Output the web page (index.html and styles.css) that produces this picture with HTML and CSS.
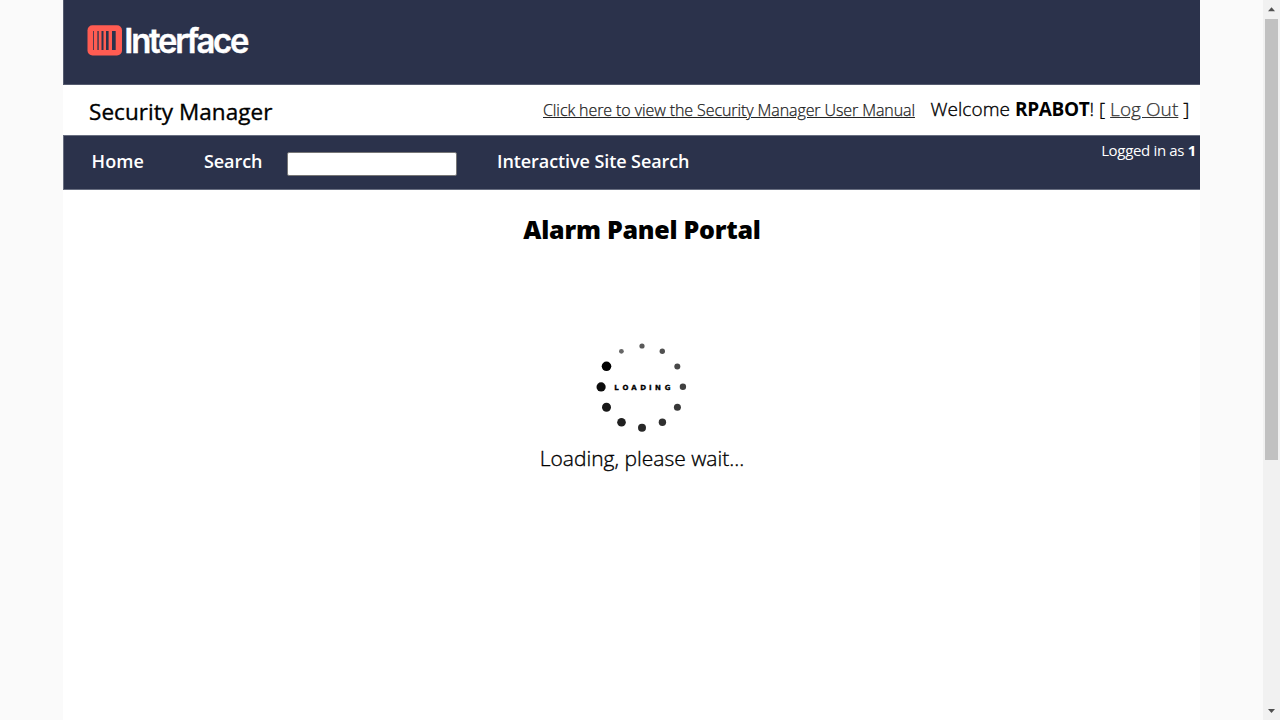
FILE: index.html
```html
<!DOCTYPE html>
<html lang="en">
<head>
<meta charset="utf-8">
<title>Security Manager</title>
<link rel="stylesheet" href="styles.css">
</head>
<body>
<div class="page">
  <header class="banner">
    <svg class="logo" width="180" height="50" viewBox="0 -8 180 50">
      <rect x="0.5" y="1.2" width="34.5" height="30.3" rx="5" fill="#ff5c52"/>
      <g fill="#2b324b">
        <rect x="6" y="7" width="0.8" height="19"/>
        <rect x="10.4" y="7" width="1.3" height="19"/>
        <rect x="14.5" y="7" width="2" height="19"/>
        <rect x="19" y="7" width="2.6" height="19"/>
        <rect x="25" y="7" width="3.7" height="19"/>
      </g>
      <text class="wordmark" x="37.3" y="28.8" textLength="122.8" lengthAdjust="spacingAndGlyphs">Interface</text>
    </svg>
  </header>
  <div class="titlebar">
    <div class="app-name">Security Manager</div>
    <a class="manual">Click here to view the Security Manager User Manual</a>
    <div class="welcome">Welcome <b>RPABOT</b>! [ <a class="logout">Log Out</a> ]</div>
  </div>
  <nav class="nav">
    <span class="home">Home</span>
    <span class="search">Search</span>
    <input class="query" type="text">
    <span class="site-search">Interactive Site Search</span>
    <span class="status">Logged in as <b>1</b></span>
  </nav>
  <main class="content">
    <h1 class="heading">Alarm Panel Portal</h1>
    <svg class="spinner" width="100" height="100" viewBox="592 337 100 100">
      <circle cx="642" cy="346" r="2.6" fill="#595959"/>
      <circle cx="662.3" cy="351.3" r="2.7" fill="#505050"/>
      <circle cx="677.3" cy="366.4" r="3" fill="#484848"/>
      <circle cx="682.9" cy="386.8" r="3.2" fill="#404040"/>
      <circle cx="677.4" cy="407.3" r="3.5" fill="#383838"/>
      <circle cx="662.4" cy="422.2" r="3.7" fill="#303030"/>
      <circle cx="642" cy="427.7" r="4" fill="#282828"/>
      <circle cx="621.5" cy="422.2" r="4.3" fill="#202020"/>
      <circle cx="606.5" cy="407.3" r="4.5" fill="#181818"/>
      <circle cx="601.1" cy="386.9" r="4.6" fill="#0c0c0c"/>
      <circle cx="606.5" cy="366.3" r="4.8" fill="#000"/>
      <circle cx="621.4" cy="351.3" r="2.4" fill="#666"/>
      <text class="spinner-label" x="614.3 622.6 631.3 640.3 648.9 655 664.8" y="389.8">LOADING</text>
    </svg>
    <p class="wait">Loading, please wait...</p>
  </main>
</div>
<div class="scrollbar">
  <svg class="arrow" width="17" height="18" viewBox="0 0 17 18"><path d="M5 11.3h7L8.5 7.3z" fill="#505050"/></svg>
  <div class="thumb"></div>
  <svg class="arrow last" width="17" height="18" viewBox="0 0 17 18"><path d="M5 7h7L8.5 11z" fill="#505050"/></svg>
</div>
</body>
</html>
```

FILE: styles.css
```css
* { box-sizing: border-box; }
body {
  margin: 0;
  height: 720px;
  overflow: hidden;
  display: flex;
  padding-left: 63px;
  background: #fafafa;
  color: #000;
  font-family: "Open Sans", "Noto Sans", sans-serif;
}
.page { width: 1137px; height: 720px; background: #fff; }
.banner {
  height: 85px;
  padding: 16px 0 0 23px;
  background: #2b324b;
  border-left: 1px solid #555b6f;
  border-bottom: 1px solid #555b6f;
}
.logo { display: block; }
.wordmark { font: 600 33.5px Inter, sans-serif; letter-spacing: -2.3px; fill: #fff; stroke: #fff; stroke-width: 0.4px; }
.titlebar { display: flex; height: 50px; white-space: nowrap; }
.app-name { width: 480px; padding-left: 26px; font-size: 22.5px; font-weight: 400; letter-spacing: 0.05px; line-height: 54px; -webkit-text-stroke: 0.35px #000; }
.manual { width: 387.5px; font-size: 16px; font-weight: 300; letter-spacing: -0.09px; line-height: 51px; color: #222; text-decoration: underline; -webkit-text-stroke: 0.25px #222; }
.welcome { font-size: 19px; line-height: 49px; font-weight: 300; letter-spacing: 0.06px; -webkit-text-stroke: 0.35px #000; }
.welcome b { font-weight: 700; letter-spacing: -0.35px; -webkit-text-stroke: 0; }
.logout { color: #333; text-decoration: underline; -webkit-text-stroke: 0.25px #333; }
.nav {
  display: flex;
  height: 55px;
  background: #2b324b;
  border: 1px solid #686e80;
  border-right: 0;
  color: #fff;
  font-size: 18px;
  font-weight: 600;
  letter-spacing: -0.08px;
  line-height: 51px;
  white-space: nowrap;
}
.home { width: 140px; padding-left: 27.5px; letter-spacing: 0.1px; }
.search { width: 83px; }
.query { width: 170px; height: 24px; margin: 16px 40px 0 0; border: 1px solid #767676; border-radius: 2px; background: #fff; }
.status { margin-left: auto; padding-right: 4px; font-size: 15px; font-weight: 400; letter-spacing: -0.33px; line-height: 29px; }
.content { display: flex; flex-direction: column; align-items: center; padding: 19px 0 0 21px; }
.heading { margin: 0; font-size: 25px; font-weight: 800; letter-spacing: -0.25px; line-height: 41px; height: 40px; }
.spinner { margin-top: 88px; }
.spinner-label { font: bold 7px "DejaVu Sans", sans-serif; fill: #000; stroke: #000; stroke-width: 0.3px; }
.wait { margin: 1px 0 0; font-size: 21px; line-height: 40px; font-weight: 300; -webkit-text-stroke: 0.35px #000; }
.scrollbar { display: flex; flex-direction: column; width: 17px; height: 720px; margin-left: 63px; background: #f1f1f1; }
.arrow { display: block; flex: none; }
.thumb { width: 13px; height: 441px; margin: 1px 0 0 2px; background: #c1c1c1; }
.last { margin-top: auto; }
```
